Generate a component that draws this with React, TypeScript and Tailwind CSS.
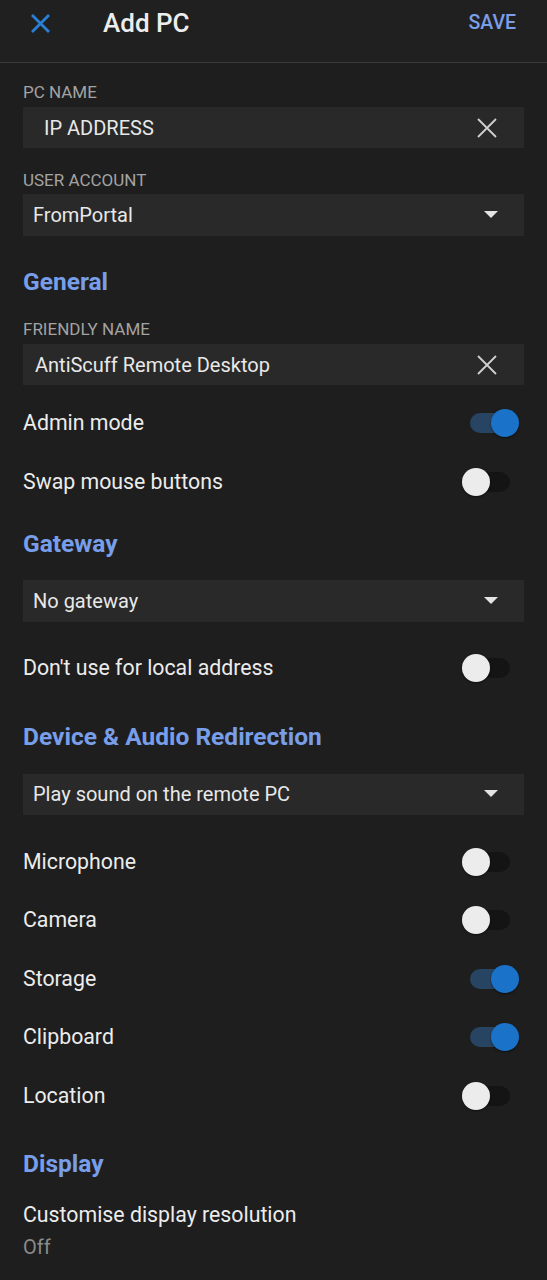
import React from "react";

const font = { fontFamily: "Roboto, 'Noto Sans', Arial, sans-serif" };

function ClearIcon() {
  return (
    <svg width="22" height="22" viewBox="0 0 22 22" className="text-[#d0d0d0]">
      <path d="M2 2 L20 20 M20 2 L2 20" stroke="currentColor" strokeWidth="1.8" fill="none" />
    </svg>
  );
}

function Caret() {
  return (
    <svg width="14" height="8" viewBox="0 0 14 8" className="text-[#e4e4e4]">
      <path d="M0 0 H14 L7 7 Z" fill="currentColor" />
    </svg>
  );
}

function Toggle({ on }: { on: boolean }) {
  return (
    <div className="relative h-[28px] w-[57px]">
      <div
        className={`absolute left-[8px] top-[4px] h-[20px] w-[40px] rounded-full ${
          on ? "bg-[#274462]" : "bg-[#141414]"
        }`}
      />
      <div
        className={`absolute top-0 h-[28px] w-[28px] rounded-full shadow-[0_1px_2px_rgba(0,0,0,0.5)] ${
          on ? "left-[29px] bg-[#1a72c9]" : "left-0 bg-[#ececec]"
        }`}
      />
    </div>
  );
}

function Label({ children, className = "" }: { children: React.ReactNode; className?: string }) {
  return (
    <p className={`h-[20px] text-[17px] leading-[20px] uppercase text-[#a3a3a3] ${className}`}>{children}</p>
  );
}

function Field({
  text,
  trailing,
  indent,
  className = "",
}: {
  text: string;
  trailing: "clear" | "caret";
  indent: string;
  className?: string;
}) {
  return (
    <div className={`flex h-[41px] items-center justify-between bg-[#292929] pr-[26px] ${indent} ${className}`}>
      <span className="text-[20px] text-[#e8e8e8]">{text}</span>
      {trailing === "clear" ? <ClearIcon /> : <Caret />}
    </div>
  );
}

function Heading({ children, className = "" }: { children: React.ReactNode; className?: string }) {
  return (
    <h2 className={`h-[30px] text-[24.5px] font-bold leading-[30px] text-[#789ee9] ${className}`}>{children}</h2>
  );
}

function SwitchRow({ label, on }: { label: string; on: boolean }) {
  return (
    <div className="flex h-[58.5px] items-center justify-between pr-[5px]">
      <span className="text-[21.3px] text-[#ececec]">{label}</span>
      <Toggle on={on} />
    </div>
  );
}

export default function App() {
  return (
    <div style={font} className="h-[1280px] w-[547px] overflow-hidden bg-[#1e1e1e]">
      <header className="flex h-[63px] items-center border-b border-[#3a3a3a] bg-[#202020] px-[30px] pb-[16px]">
        <svg width="21" height="21" viewBox="0 0 21 21" className="text-[#2a7fd6]">
          <path d="M2 2 L19 19 M19 2 L2 19" stroke="currentColor" strokeWidth="2.8" fill="none" />
        </svg>
        <h1 className="ml-[52px] text-[26px] font-medium text-[#ededed]">Add PC</h1>
        <button type="button" className="ml-auto mr-[1px] text-[19.5px] font-medium text-[#7b9ee8]">
          SAVE
        </button>
      </header>

      <main className="flex flex-col px-[23px]">
        <Label className="mt-[19px]">PC Name</Label>
        <Field text="IP ADDRESS" trailing="clear" indent="pl-[21px]" className="mt-[5px]" />

        <Label className="mt-[22px]">User Account</Label>
        <Field text="FromPortal" trailing="caret" indent="pl-[10px]" className="mt-[4px] h-[42px]" />

        <Heading className="mt-[31px]">General</Heading>
        <Label className="mt-[22px]">Friendly Name</Label>
        <Field text="AntiScuff Remote Desktop" trailing="clear" indent="pl-[12px]" className="mt-[5px]" />
        <div className="mt-[9px]">
          <SwitchRow label="Admin mode" on />
          <SwitchRow label="Swap mouse buttons" on={false} />
        </div>

        <Heading className="mt-[18px]">Gateway</Heading>
        <Field text="No gateway" trailing="caret" indent="pl-[10px]" className="mt-[21px] h-[42px]" />
        <div className="mt-[17px]">
          <SwitchRow label="Don't use for local address" on={false} />
        </div>

        <Heading className="mt-[24px]">Device &amp; Audio Redirection</Heading>
        <Field text="Play sound on the remote PC" trailing="caret" indent="pl-[10px]" className="mt-[22px]" />
        <div className="mt-[18px]">
          <SwitchRow label="Microphone" on={false} />
          <SwitchRow label="Camera" on={false} />
          <SwitchRow label="Storage" on />
          <SwitchRow label="Clipboard" on />
          <SwitchRow label="Location" on={false} />
        </div>

        <Heading className="mt-[24px]">Display</Heading>
        <div className="mt-[22px] flex flex-col">
          <span className="text-[21.3px] leading-[28px] text-[#ececec]">Customise display resolution</span>
          <span className="mt-[5px] text-[20px] leading-[26px] text-[#8a8a8a]">Off</span>
        </div>
      </main>
    </div>
  );
}
